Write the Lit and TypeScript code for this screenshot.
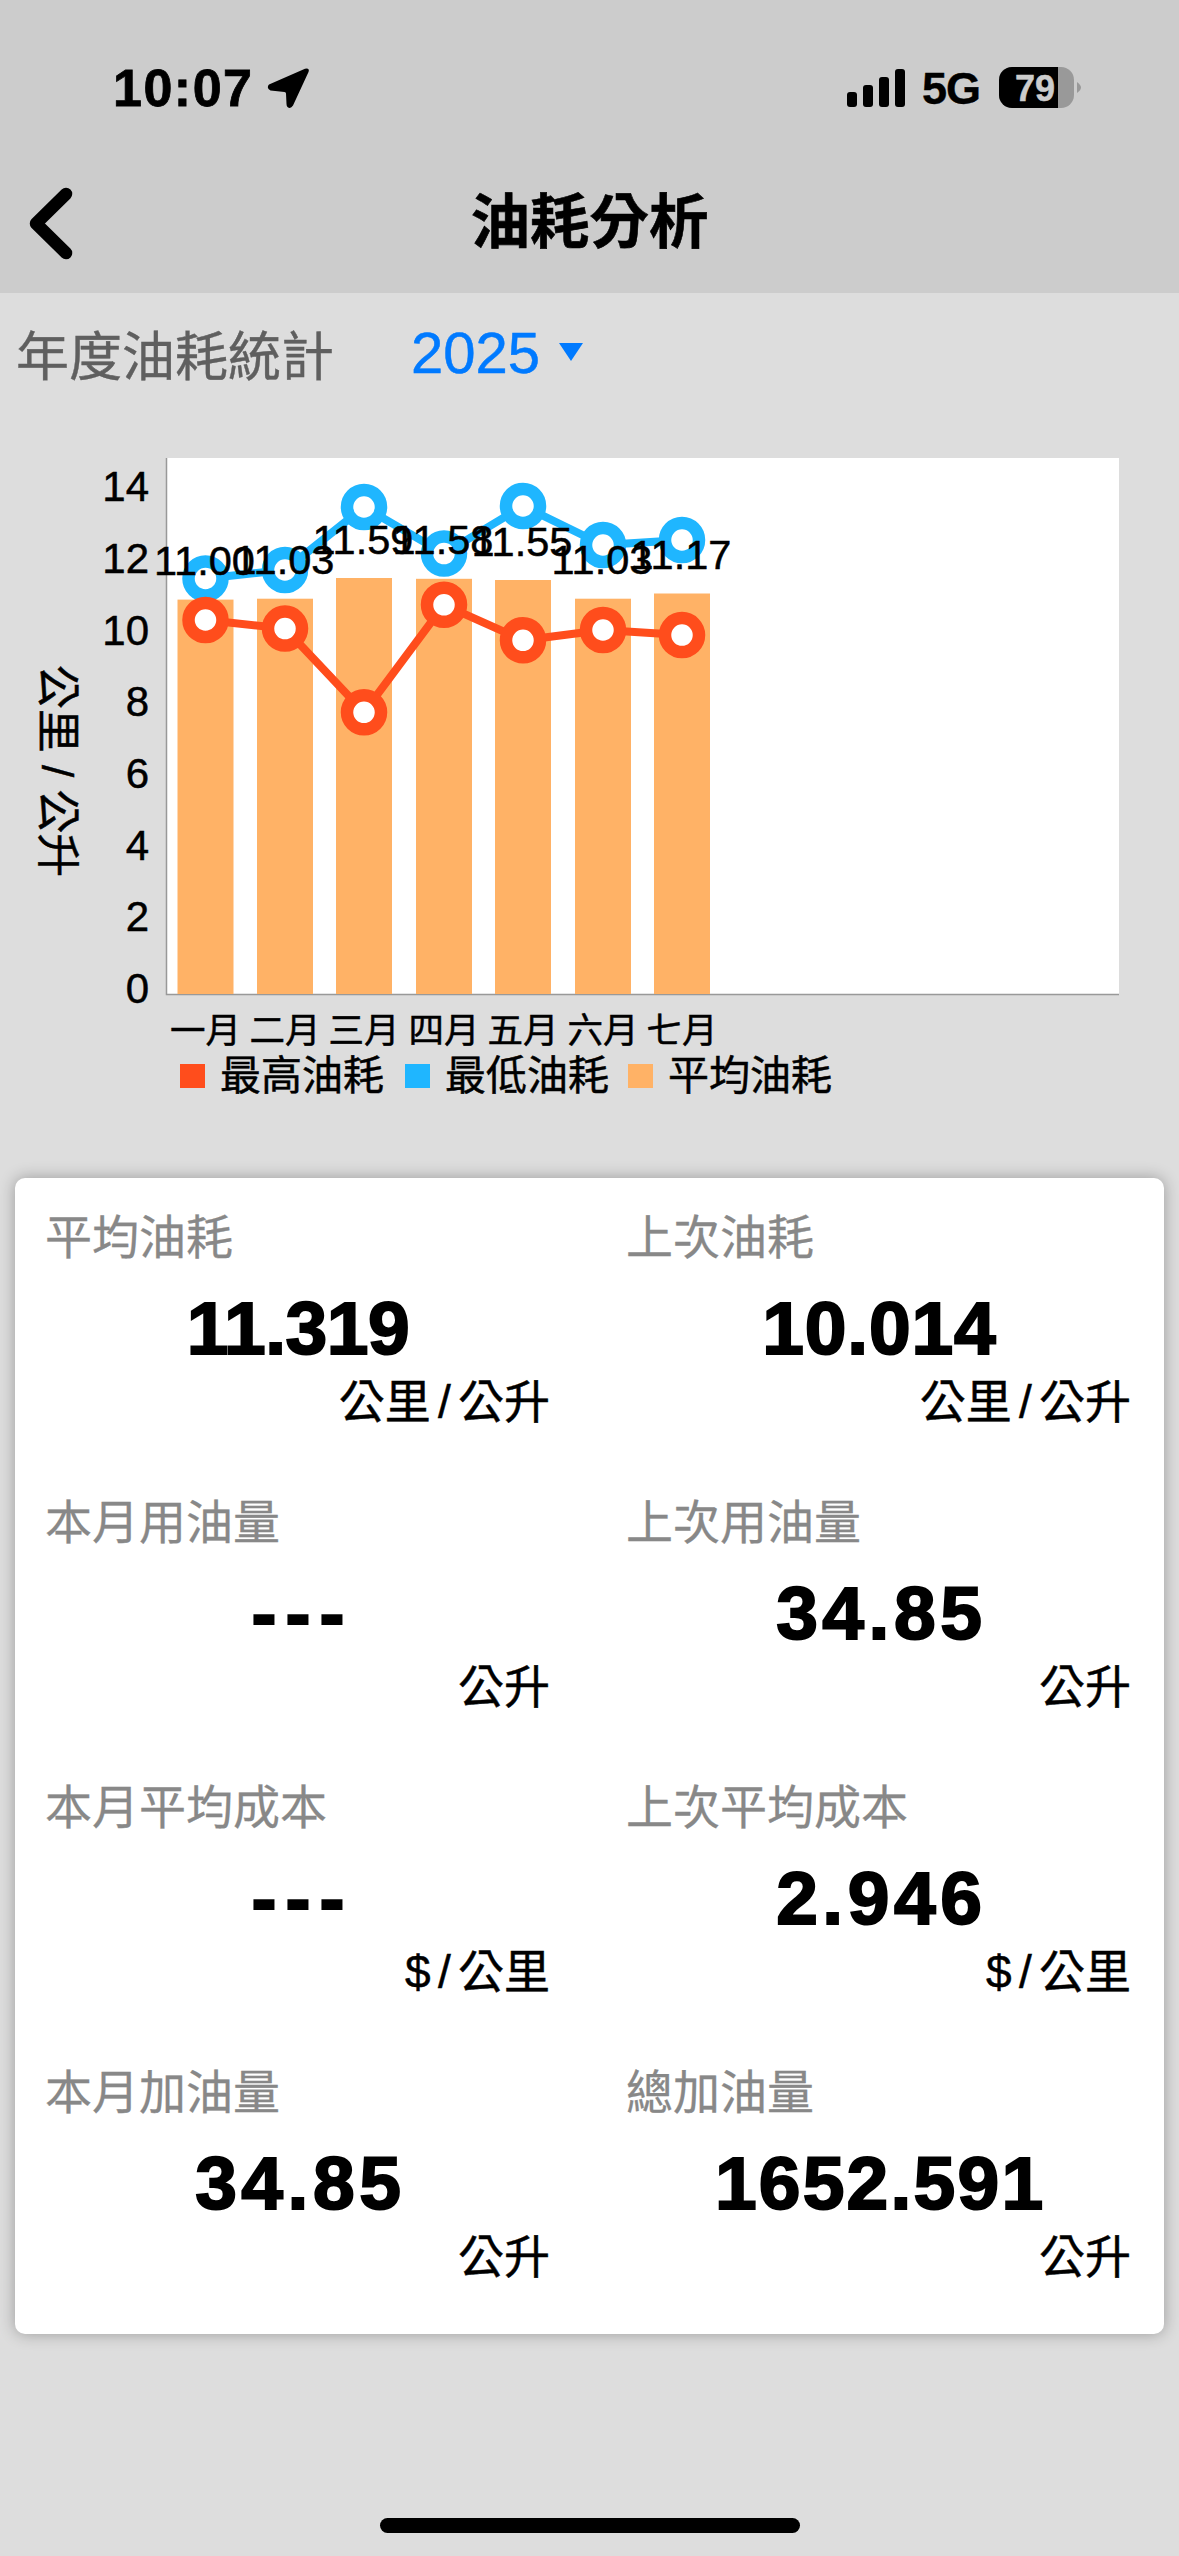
import { LitElement, html, css, svg, unsafeCSS } from "lit";
import { customElement } from "lit/decorators.js";

const CJK = unsafeCSS(`"Liberation Sans", "Noto Sans CJK TC", sans-serif`);
const X = [205.5, 285, 364, 444, 523, 603, 682];
const BAR_TOP = [599.6, 598.7, 578, 578.8, 580, 598.7, 593.5];
const BLUE = [578.5, 570, 507, 553.6, 506, 545, 540];
const RED = [620, 628.6, 712.3, 604.8, 640.3, 630, 635.1];
const LABELS = ["11.00", "11.03", "11.59", "11.58", "11.55", "11.03", "11.17"];
const MONTHS = ["一月", "二月", "三月", "四月", "五月", "六月", "七月"];
const TICKS = [0, 2, 4, 6, 8, 10, 12, 14];
const LEGEND = [
  { x: 180, tx: 220, c: "#ff4d1c", t: "最高油耗" },
  { x: 405, tx: 445, c: "#1fb6ff", t: "最低油耗" },
  { x: 628, tx: 668, c: "#ffb266", t: "平均油耗" },
];
const STATS: [string, string, string, number][] = [
  ["平均油耗", "11.319", "公里 / 公升", -0.5],
  ["上次油耗", "10.014", "公里 / 公升", 0.8],
  ["本月用油量", "---", "公升", 9],
  ["上次用油量", "34.85", "公升", 4.5],
  ["本月平均成本", "---", "$ / 公里", 9],
  ["上次平均成本", "2.946", "$ / 公里", 4.5],
  ["本月加油量", "34.85", "公升", 4.5],
  ["總加油量", "1652.591", "公升", 2.2],
];

const line = (ys: number[], color: string) => svg`
  <polyline points=${ys.map((y, i) => `${X[i]},${y}`).join(" ")} fill="none" stroke=${color} stroke-width="8" stroke-linejoin="round"></polyline>
  ${ys.map((y, i) => svg`<circle cx=${X[i]} cy=${y} r="17" fill="#fff" stroke=${color} stroke-width="12.5"></circle>`)}
`;

@customElement("app-root")
export class AppRoot extends LitElement {
  static styles = css`
    :host { display: block; width: 1179px; height: 2556px; overflow: hidden; background: #ddd; font-family: ${CJK}; color: #000; }
    .top { background: #ccc; height: 293px; }
    .status { height: 187px; box-sizing: border-box; padding: 66px 0 0 113px; display: flex; align-items: flex-start; }
    .time { font-size: 52px; font-weight: 700; line-height: 44px; letter-spacing: 1.5px; width: 154px; -webkit-text-stroke: 0.8px #000; }
    .loc { width: 44px; height: 42px; margin-top: 2px; }
    .right { margin-left: auto; margin-right: 98px; display: flex; align-items: flex-start; }
    .sig { width: 58px; height: 38px; margin-top: 3px; }
    .five { font-size: 45px; font-weight: 700; line-height: 40px; margin: 3px 19px 0 17px; letter-spacing: -1px; -webkit-text-stroke: 0.4px #000; }
    .bat { width: 82px; height: 42px; margin-top: 1px; }
    .nav { display: grid; grid-template-columns: 120px 1fr 120px; align-items: center; height: 72px; }
    .back { width: 60px; height: 80px; margin-left: 22px; margin-top: -4px; margin-bottom: -4px; }
    .title { text-align: center; font-size: 59.5px; font-weight: 700; line-height: 72px; -webkit-text-stroke: 0.6px #000; }
    .year { height: 120px; display: flex; align-items: center; padding-left: 16px; box-sizing: border-box; }
    .yl { font-size: 53px; color: #5f5f5f; width: 395px; -webkit-text-stroke: 0.4px #5f5f5f; }
    .yv { font-size: 58px; color: #007aff; line-height: 64px; width: 148px; -webkit-text-stroke: 0.5px #007aff; }
    .tri { width: 24px; height: 18px; margin-top: -2px; }
    .chart { display: block; width: 1179px; height: 700px; margin-bottom: 65px; }
    .chart text { font-family: ${CJK}; fill: #000; stroke: #000; stroke-width: 0.5px; }
    .ax { font-size: 42px; text-anchor: end; }
    .dl { font-size: 41.5px; text-anchor: middle; }
    .mo { font-size: 35.5px; text-anchor: middle; }
    .lg { font-size: 41px; }
    .yt { font-size: 44px; text-anchor: middle; }
    .card { margin: 0 15px; background: #fff; border-radius: 10px; box-shadow: 0 0 16px rgba(0,0,0,.3); padding: 32px 0 49px 32px; display: grid; grid-template-columns: 581px 1fr; row-gap: 65px; }
    .cell { width: 502px; display: flex; flex-direction: column; }
    .lab { font-size: 47px; line-height: 56px; color: #888; margin-left: -2px; -webkit-text-stroke: 0.3px #888; }
    .val { font-size: 75px; font-weight: 700; line-height: 84px; margin-top: 20px; text-align: center; -webkit-text-stroke: 2px #000; }
    .unit { font-size: 46px; line-height: 56px; margin: 4px -1px 0 0; text-align: right; word-spacing: -5.5px; -webkit-text-stroke: 0.5px #000; }
    .home { width: 420px; height: 15px; background: #000; border-radius: 8px; margin: 184px 0 0 380px; }
  `;

  render() {
    return html`
      <div class="top">
        <div class="status">
          <div class="time">10:07</div>
          <svg class="loc" viewBox="0 0 44 42"><path d="M38 0.8 Q43 -0.5 41.5 4 L26 37.5 Q23.5 41.5 20.5 39 Q19.5 38 19.5 36 L19 25.5 Q19 24 17.5 24 L3.5 22.5 Q-1 20 2 16.5 Z" fill="#000"></path></svg>
          <div class="right">
            <svg class="sig" viewBox="0 0 58 38">
              <rect x="0" y="23" width="10" height="15" rx="3"></rect>
              <rect x="16" y="16" width="10" height="22" rx="3"></rect>
              <rect x="32" y="8" width="10" height="30" rx="3"></rect>
              <rect x="48" y="0" width="10" height="38" rx="3"></rect>
            </svg>
            <div class="five">5G</div>
            <svg class="bat" viewBox="0 0 82 42">
              <rect x="0" y="0" width="75" height="41" rx="13" fill="#999"></rect>
              <path d="M13 0 H59 V41 H13 A13 13 0 0 1 0 28 V13 A13 13 0 0 1 13 0Z" fill="#000"></path>
              <path d="M78 15 Q82 18 82 20.5 Q82 23 78 26Z" fill="#999"></path>
              <text x="36" y="34" text-anchor="middle" font-size="36" font-weight="700" fill="#ccc" stroke="#ccc" stroke-width="0.5">79</text>
            </svg>
          </div>
        </div>
        <div class="nav">
          <svg class="back" viewBox="0 0 60 80"><path d="M44 11 L14 40.5 L44 70" fill="none" stroke="#000" stroke-width="12.5" stroke-linecap="round" stroke-linejoin="round"></path></svg>
          <div class="title">油耗分析</div>
          <div></div>
        </div>
      </div>
      <div class="year">
        <div class="yl">年度油耗統計</div>
        <div class="yv">2025</div>
        <svg class="tri" viewBox="0 0 24 18"><path d="M0 0H24L12 18Z" fill="#007aff"></path></svg>
      </div>
      <svg class="chart" viewBox="0 413 1179 700">
        <rect x="166" y="458" width="953" height="536" fill="#fff"></rect>
        <path d="M166.5 458V994.5H1119" fill="none" stroke="#999" stroke-width="1.5"></path>
        ${BAR_TOP.map((y, i) => svg`<rect x=${X[i] - 28} y=${y} width="56" height=${994 - y} fill="#ffb266"></rect>`)}
        ${line(BLUE, "#1fb6ff")}
        ${line(RED, "#ff4d1c")}
        ${BAR_TOP.map((y, i) => svg`<text class="dl" x=${X[i] - 1} y=${y - 24.5}>${LABELS[i]}</text>`)}
        ${TICKS.map((t) => svg`<text class="ax" x="149" y=${1003 - t * 35.85}>${t}</text>`)}
        ${X.map((x, i) => svg`<text class="mo" x=${x} y="1043">${MONTHS[i]}</text>`)}
        ${LEGEND.map((l) => svg`<rect x=${l.x} y="1064" width="25" height="24" fill=${l.c}></rect><text class="lg" x=${l.tx} y="1090">${l.t}</text>`)}
        <text class="yt" transform="translate(42 771) rotate(90)">公里 / 公升</text>
      </svg>
      <div class="card">
        ${STATS.map(([a, b, c, ls]) => html`
          <div class="cell">
            <div class="lab">${a}</div>
            <div class="val" style="letter-spacing:${ls}px;padding-left:${ls}px">${b}</div>
            <div class="unit">${c}</div>
          </div>`)}
      </div>
      <div class="home"></div>
    `;
  }
}
